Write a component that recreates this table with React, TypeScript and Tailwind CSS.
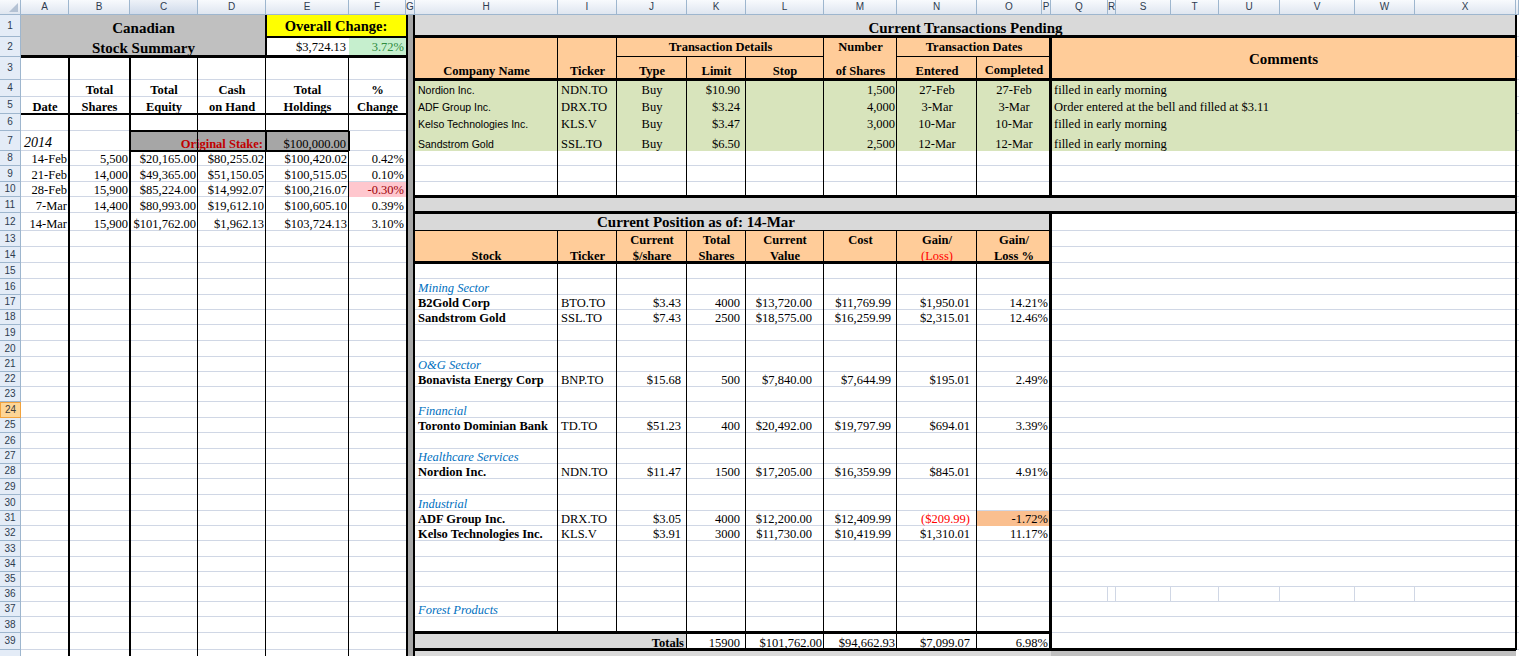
import React from "react";

// sheet columns; "#" is the row-number gutter, "Y" the sliver past column X
const COLS = ["#", "A", "B", "C", "D", "E", "F", "G", "H", "I", "J", "K", "L", "M", "N", "O", "P", "Q", "R", "S", "T", "U", "V", "W", "X", "Y"];
const ci = (c: string) => COLS.indexOf(c) + 1;

type Span = { c: string; r: number; c2?: string; r2?: number };

function Cell({ c, r, c2, r2, className = "", children }: Span & { className?: string; children?: React.ReactNode }) {
  return (
    <div
      className={className}
      style={{ gridColumn: `${ci(c)} / ${ci(c2 ?? c) + 1}`, gridRow: `${r + 1} / ${(r2 ?? r) + 2}` }}
    >
      {children}
    </div>
  );
}

const ALIGN = { l: "justify-start", c: "justify-center", r: "justify-end" };
const VALIGN = { b: "items-end", m: "items-center" };

type TProps = Span & {
  a?: keyof typeof ALIGN;
  v?: keyof typeof VALIGN;
  p?: string;
  className?: string;
  children?: React.ReactNode;
};

function T({ a = "l", v = "b", p = "px-[3px]", className = "", children, ...span }: TProps) {
  return (
    <Cell {...span} className={`flex whitespace-nowrap ${ALIGN[a]} ${VALIGN[v]} ${p} ${className}`}>
      {children}
    </Cell>
  );
}

const HW = { 1: "h-px -mt-px", 2: "h-[2px] -mt-px", 3: "h-[3px] -mt-[2px]" };
const VW = { 1: "w-px -ml-px", 2: "w-[2px] -ml-px", 3: "w-[3px] -ml-[2px]" };

// horizontal rule on the top edge of row r
function HL({ r, c, c2, w = 1 }: { r: number; c: string; c2: string; w?: 1 | 2 | 3 }) {
  return <Cell c={c} c2={c2} r={r} className={`self-start bg-black ${HW[w]}`} />;
}
// vertical rule on the left edge of column c
function VL({ c, r, r2, w = 1 }: { c: string; r: number; r2: number; w?: 1 | 2 | 3 }) {
  return <Cell c={c} r={r} r2={r2} className={`justify-self-start bg-black ${VW[w]}`} />;
}

const summary: string[][] = [
  ["8", "14-Feb", "5,500", "$20,165.00", "$80,255.02", "$100,420.02", "0.42%"],
  ["9", "21-Feb", "14,000", "$49,365.00", "$51,150.05", "$100,515.05", "0.10%"],
  ["10", "28-Feb", "15,900", "$85,224.00", "$14,992.07", "$100,216.07", "-0.30%"],
  ["11", "7-Mar", "14,400", "$80,993.00", "$19,612.10", "$100,605.10", "0.39%"],
  ["12", "14-Mar", "15,900", "$101,762.00", "$1,962.13", "$103,724.13", "3.10%"],
];

const pending: string[][] = [
  ["4", "Nordion Inc.", "NDN.TO", "Buy", "$10.90", "1,500", "27-Feb", "27-Feb", "filled in early morning"],
  ["5", "ADF Group Inc.", "DRX.TO", "Buy", "$3.24", "4,000", "3-Mar", "3-Mar", "Order entered at the bell and filled at $3.11"],
  ["6", "Kelso Technologies Inc.", "KLS.V", "Buy", "$3.47", "3,000", "10-Mar", "10-Mar", "filled in early morning"],
  ["7", "Sandstrom Gold", "SSL.TO", "Buy", "$6.50", "2,500", "12-Mar", "12-Mar", "filled in early morning"],
];

const sectors: [number, string][] = [
  [16, "Mining Sector"],
  [21, "O&G Sector"],
  [24, "Financial"],
  [27, "Healthcare Services"],
  [30, "Industrial"],
  [37, "Forest Products"],
];

const positions: string[][] = [
  ["17", "B2Gold Corp", "BTO.TO", "$3.43", "4000", "$13,720.00", "$11,769.99", "$1,950.01", "14.21%"],
  ["18", "Sandstrom Gold", "SSL.TO", "$7.43", "2500", "$18,575.00", "$16,259.99", "$2,315.01", "12.46%"],
  ["22", "Bonavista Energy Corp", "BNP.TO", "$15.68", "500", "$7,840.00", "$7,644.99", "$195.01", "2.49%"],
  ["25", "Toronto Dominian Bank", "TD.TO", "$51.23", "400", "$20,492.00", "$19,797.99", "$694.01", "3.39%"],
  ["28", "Nordion Inc.", "NDN.TO", "$11.47", "1500", "$17,205.00", "$16,359.99", "$845.01", "4.91%"],
  ["31", "ADF Group Inc.", "DRX.TO", "$3.05", "4000", "$12,200.00", "$12,409.99", "($209.99)", "-1.72%"],
  ["32", "Kelso Technologies Inc.", "KLS.V", "$3.91", "3000", "$11,730.00", "$10,419.99", "$1,310.01", "11.17%"],
];

const POS_PAD: Record<string, string> = {
  J: "pr-[6px]",
  K: "pr-[6px]",
  L: "pr-[12px]",
  M: "pr-[6px]",
  N: "pr-[7px]",
  O: "pr-[3px]",
};

export default function App() {
  return (
    <div className="h-[656px] w-[1519px] overflow-hidden bg-white font-['Liberation_Serif',serif] text-[12.5px] leading-[14px] text-black">
      <div className="grid grid-cols-[21px_48px_61px_68px_68px_83px_57px_9px_143px_59px_70px_59px_78px_73px_80px_65px_9px_57px_8px_55px_48px_61px_75px_60px_101px_3px] grid-rows-[15px_22px_20px_23px_17px_17px_17px_20px_15px_16px_15px_16px_18px_16px_16px_16px_16px_15px_15px_16px_16px_15px_15px_15px_16px_15px_16px_15px_15px_16px_16px_15px_15px_16px_15px_15px_15px_15px_16px_17px_20px]">
        {/* Column letters */}
        <Cell c="#" r={0} className="relative border-r border-b border-[#9eb6ce] bg-linear-to-b from-[#f8fafd] to-[#dfe6f0]">
          <svg className="absolute right-[2px] bottom-[2px]" width="9" height="9" viewBox="0 0 9 9">
            <polygon points="9,0 9,9 0,9" fill="#b4c2d4" />
          </svg>
        </Cell>
        {COLS.slice(1).map((c) => (
          <Cell
            key={c}
            c={c}
            r={0}
            className={
              c === "C"
                ? "flex items-center justify-center border-r border-b border-[#9eb6ce] bg-linear-to-b from-[#eef2f8] to-[#cfdaea] font-['Liberation_Sans',sans-serif] text-[10px] leading-none text-[#2e3c50]"
                : "flex items-center justify-center border-r border-b border-[#9eb6ce] bg-linear-to-b from-[#f8fafd] to-[#dfe6f0] font-['Liberation_Sans',sans-serif] text-[10px] leading-none text-[#2e3c50]"
            }
          >
            {c === "Y" ? "" : c}
          </Cell>
        ))}

        {/* Row numbers (row 40 is only a sliver, no label shows) */}
        {Array.from({ length: 40 }, (_, i) => i + 1).map((n) => (
          <Cell
            key={`n${n}`}
            c="#"
            r={n}
            className={
              n === 24
                ? "flex items-center justify-center border border-[#f2a23c] bg-[#fdd596] font-['Liberation_Sans',sans-serif] text-[10px] leading-none text-[#3a3a3a]"
                : "flex items-center justify-center border-r border-b border-[#9eb6ce] bg-[#e4ecf7] font-['Liberation_Sans',sans-serif] text-[10px] leading-none text-[#2e3c50]"
            }
          >
            {n < 40 ? n : ""}
          </Cell>
        ))}

        {/* Gridlines */}
        {Array.from({ length: 39 }, (_, i) => i + 1).map((r) => (
          <Cell key={`g${r}`} c="A" c2="Y" r={r} className="border-b border-[#d0d7e5]" />
        ))}
        {["R", "S", "T", "U", "V", "W", "X"].map((c) => (
          <Cell key={`v36${c}`} c={c} r={36} className="-ml-px w-px justify-self-start bg-[#d0d7e5]" />
        ))}

        {/* Fills */}
        <Cell c="A" c2="D" r={1} r2={2} className="bg-[#c0c0c0]" />
        <Cell c="E" c2="F" r={1} className="bg-[#ffff00]" />
        <Cell c="F" r={2} className="bg-[#c6efce]" />
        <Cell c="C" c2="E" r={7} className="bg-[#a6a6a6]" />
        <Cell c="F" r={10} className="bg-[#ffc7ce]" />
        <Cell c="H" c2="X" r={1} className="bg-[#d9d9d9]" />
        <Cell c="H" c2="X" r={2} r2={3} className="bg-[#ffcc99]" />
        <Cell c="H" c2="X" r={4} r2={7} className="bg-[#d8e4bc]" />
        <Cell c="H" c2="X" r={11} className="bg-[#d9d9d9]" />
        <Cell c="H" c2="P" r={12} className="bg-[#d9d9d9]" />
        <Cell c="H" c2="P" r={13} r2={14} className="bg-[#ffcc99]" />
        <Cell c="O" c2="P" r={31} className="bg-[#fabf8f]" />
        <Cell c="H" c2="J" r={39} className="bg-[#d9d9d9]" />
        <Cell c="H" c2="P" r={40} className="bg-[#d9d9d9]" />
        <Cell c="Q" c2="X" r={40} className="bg-[#c0c0c0]" />
        <Cell c="G" r={1} r2={40} className="border-x-2 border-black bg-[#a6a6a6]" />

        {/* Canadian stock summary */}
        <T c="A" c2="D" r={1} a="c" className="text-[15px] leading-[18px] font-bold">Canadian</T>
        <T c="A" c2="D" r={2} a="c" className="text-[15px] leading-[18px] font-bold">Stock Summary</T>
        <T c="E" c2="F" r={1} a="c" v="m" className="text-[14.5px] leading-[18px] font-bold">Overall Change:</T>
        <T c="E" r={2} a="r" v="m">$3,724.13</T>
        <T c="F" r={2} a="r" v="m" p="pr-[2px]" className="text-[#2e8b3e]">3.72%</T>

        <T c="A" r={5} a="c" className="font-bold">Date</T>
        {[
          ["B", "Total", "Shares"],
          ["C", "Total", "Equity"],
          ["D", "Cash", "on Hand"],
          ["E", "Total", "Holdings"],
          ["F", "%", "Change"],
        ].map(([c, top, bottom]) => (
          <React.Fragment key={`h${c}`}>
            <T c={c} r={4} a="c" className="font-bold">{top}</T>
            <T c={c} r={5} a="c" className="font-bold">{bottom}</T>
          </React.Fragment>
        ))}

        <T c="A" r={7} className="text-[14px] leading-[16px] italic">2014</T>
        <T c="C" c2="D" r={7} a="r" className="font-bold text-[#c00000]">Original Stake:</T>
        <T c="E" r={7} a="r">$100,000.00</T>

        {summary.map(([row, ...vals]) =>
          vals.map((val, i) => (
            <T
              key={`s${row}${i}`}
              c={"ABCDEF"[i]}
              r={Number(row)}
              a="r"
              p="pr-[2px]"
              className={val.startsWith("-") ? "text-[#9c0006]" : ""}
            >
              {val}
            </T>
          ))
        )}

        {/* Current transactions pending */}
        <T c="H" c2="X" r={1} a="c" className="text-[15px] leading-[18px] font-bold">Current Transactions Pending</T>
        <T c="J" c2="L" r={2} a="c" v="m" className="font-bold">Transaction Details</T>
        <T c="M" r={2} a="c" v="m" className="font-bold">Number</T>
        <T c="N" c2="P" r={2} a="c" v="m" className="font-bold">Transaction Dates</T>
        <T c="Q" c2="X" r={2} r2={3} a="c" v="m" className="text-[15px] leading-[18px] font-bold">Comments</T>
        {[
          ["H", "Company Name"],
          ["I", "Ticker"],
          ["J", "Type"],
          ["K", "Limit"],
          ["L", "Stop"],
          ["M", "of Shares"],
          ["N", "Entered"],
        ].map(([c, label]) => (
          <T key={`th${c}`} c={c} r={3} a="c" p="pb-[2px]" className="font-bold">{label}</T>
        ))}
        <T c="O" c2="P" r={3} a="c" p="pb-[3px]" className="font-bold">Completed</T>

        {pending.map(([row, name, ticker, type, limit, shares, entered, done, note]) => {
          const r = Number(row);
          return (
            <React.Fragment key={`p${row}`}>
              <T c="H" r={r} className="font-['Liberation_Sans',sans-serif] text-[10.5px]">{name}</T>
              <T c="I" r={r}>{ticker}</T>
              <T c="J" r={r} a="c">{type}</T>
              <T c="K" r={r} a="r" p="pr-[6px]">{limit}</T>
              <T c="M" r={r} a="r" p="pr-[2px]">{shares}</T>
              <T c="N" r={r} a="c">{entered}</T>
              <T c="O" c2="P" r={r} a="c">{done}</T>
              <T c="Q" c2="X" r={r}>{note}</T>
            </React.Fragment>
          );
        })}

        {/* Current position */}
        <T c="H" c2="N" r={12} a="c" className="text-[15px] leading-[18px] font-bold">Current Position as of: 14-Mar</T>
        <T c="J" r={13} a="c" className="font-bold">Current</T>
        <T c="K" r={13} a="c" className="font-bold">Total</T>
        <T c="L" r={13} a="c" className="font-bold">Current</T>
        <T c="M" r={13} a="c" className="font-bold">Cost</T>
        <T c="N" r={13} a="c" className="font-bold">Gain/</T>
        <T c="O" c2="P" r={13} a="c" className="font-bold">Gain/</T>
        <T c="H" r={14} a="c" className="font-bold">Stock</T>
        <T c="I" r={14} a="c" className="font-bold">Ticker</T>
        <T c="J" r={14} a="c" className="font-bold">$/share</T>
        <T c="K" r={14} a="c" className="font-bold">Shares</T>
        <T c="L" r={14} a="c" className="font-bold">Value</T>
        <T c="N" r={14} a="c" className="text-[#ff0000]">(Loss)</T>
        <T c="O" c2="P" r={14} a="c" className="font-bold">Loss %</T>

        {sectors.map(([r, label]) => (
          <T key={`sec${r}`} c="H" r={r} className="italic text-[#0070c0]">{label}</T>
        ))}

        {positions.map(([row, name, ticker, ...nums]) => {
          const r = Number(row);
          return (
            <React.Fragment key={`pos${row}`}>
              <T c="H" r={r} className="font-bold">{name}</T>
              <T c="I" r={r}>{ticker}</T>
              {nums.map((val, i) => {
                const c = "JKLMNO"[i];
                return (
                  <T
                    key={`${row}${c}`}
                    c={c}
                    c2={c === "O" ? "P" : undefined}
                    r={r}
                    a="r"
                    p={POS_PAD[c]}
                    className={val.startsWith("(") ? "text-[#ff0000]" : ""}
                  >
                    {val}
                  </T>
                );
              })}
            </React.Fragment>
          );
        })}

        <T c="H" c2="J" r={39} a="r" p="pr-[3px]" className="font-bold">Totals</T>
        <T c="K" r={39} a="r" p="pr-[6px]">15900</T>
        <T c="L" r={39} a="r" p="pr-[2px]">$101,762.00</T>
        <T c="M" r={39} a="r" p="pr-[2px]">$94,662.93</T>
        <T c="N" r={39} a="r" p="pr-[7px]">$7,099.07</T>
        <T c="O" c2="P" r={39} a="r" p="pr-[3px]">6.98%</T>

        {/* Borders: summary block */}
        <HL r={3} c="A" c2="F" w={3} />
        <HL r={2} c="E" c2="F" w={2} />
        <VL c="E" r={1} r2={2} w={2} />
        <HL r={6} c="A" c2="F" w={2} />
        <VL c="B" r={3} r2={40} w={2} />
        <VL c="C" r={3} r2={40} w={2} />
        <VL c="D" r={3} r2={40} />
        <VL c="E" r={3} r2={40} />
        <VL c="F" r={3} r2={40} />
        <HL r={7} c="C" c2="E" w={2} />
        <HL r={8} c="C" c2="E" w={2} />
        <VL c="E" r={7} r2={7} w={2} />
        <VL c="F" r={7} r2={7} w={2} />

        {/* Borders: transactions */}
        <HL r={2} c="H" c2="X" w={3} />
        <HL r={3} c="J" c2="L" />
        <HL r={3} c="N" c2="P" />
        <HL r={4} c="H" c2="X" w={3} />
        <VL c="I" r={2} r2={10} />
        <VL c="J" r={2} r2={10} />
        <VL c="K" r={3} r2={10} />
        <VL c="L" r={3} r2={10} />
        <VL c="M" r={2} r2={10} />
        <VL c="N" r={2} r2={10} />
        <VL c="O" r={3} r2={10} />
        <VL c="Q" r={2} r2={10} w={3} />
        <HL r={11} c="H" c2="X" w={3} />
        <HL r={12} c="H" c2="X" w={3} />

        {/* Borders: position */}
        <HL r={13} c="H" c2="P" />
        <HL r={15} c="H" c2="P" w={3} />
        <VL c="I" r={13} r2={38} />
        <VL c="J" r={13} r2={38} />
        <VL c="K" r={13} r2={39} />
        <VL c="L" r={13} r2={39} />
        <VL c="M" r={13} r2={39} />
        <VL c="N" r={13} r2={39} />
        <VL c="O" r={13} r2={39} />
        <VL c="Q" r={12} r2={39} w={3} />
        <HL r={39} c="H" c2="P" w={3} />
        <HL r={40} c="H" c2="X" w={3} />
        <VL c="Y" r={1} r2={39} w={2} />
      </div>
    </div>
  );
}
